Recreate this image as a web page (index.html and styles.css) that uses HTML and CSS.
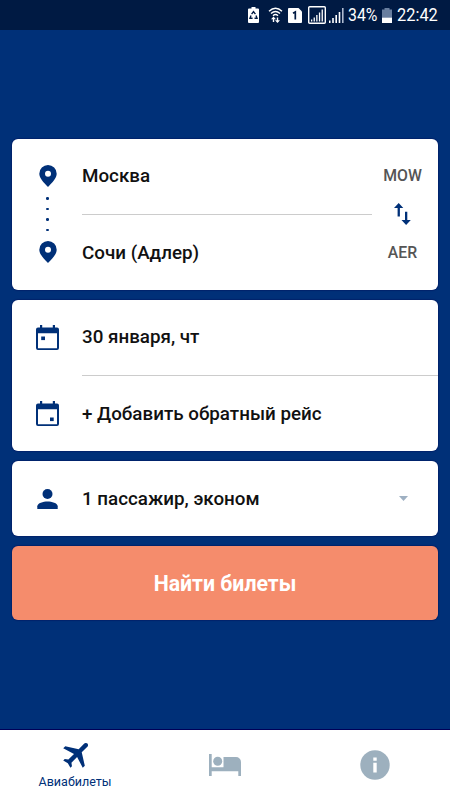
FILE: index.html
```html
<!DOCTYPE html>
<html lang="ru">
<head>
    <meta charset="UTF-8">
    <meta name="viewport" content="width=device-width, initial-scale=1.0">
    <title>Авиабилеты</title>
    <link rel="stylesheet" href="styles.css">
</head>
<body>
    <div class="app">
        <div class="status-bar">
            <svg class="recycle-icon" width="11" height="16" viewBox="0 0 11 16">
                <path fill="#fff" d="M3.500 0h4v1.500H10a1 1 0 0 1 1 1V15a1 1 0 0 1-1 1H1a1 1 0 0 1-1-1V2.500a1 1 0 0 1 1-1h2.500z"/>
                <path fill="none" stroke="#001a43" stroke-width="1.400" d="M3.600 7.200 5.500 4.700l1.900 2.500M8 8.500l1 2.700H6.500M4.600 11.200H2l1-2.700"/>
            </svg>
            <svg class="wifi-icon" width="15" height="16" viewBox="0 0 15 16">
                <g fill="none" stroke="#fff" stroke-width="1.400">
                    <path d="M1 4.200Q7.500-1.800 14 4.200M3 6.500q4.500-4 9 0M5 8.700q2.500-2.200 5 0"/>
                    <path d="M5.500 15v-4M9.500 10.500v4"/>
                </g>
                <path fill="#fff" d="M3 12.200 5.500 9.500 8 12.200zM7 13.200h5L9.500 16z"/>
            </svg>
            <svg class="sim-icon" width="14" height="15" viewBox="0 0 14 15">
                <path fill="#fff" d="M1 0h9.500L14 3.500V14a1 1 0 0 1-1 1H1a1 1 0 0 1-1-1V1a1 1 0 0 1 1-1z"/>
                <path fill="none" stroke="#001a43" stroke-width="1.700" d="M5 5.200 7.300 4v7.500"/>
            </svg>
            <svg class="signal-boxed" width="18" height="18" viewBox="0 0 18 18">
                <rect x=".7" y=".7" width="16.600" height="16.600" rx="1" fill="none" stroke="#fff" stroke-width="1.400"/>
                <path fill="#fff" d="M3 13.500h1.300v2H3zM5.600 11.500h1.300v4H5.600zM8.200 9h1.300v6.500H8.200zM10.900 6.500h1.300v9h-1.300zM13.600 3.500h1.300v12h-1.300z"/>
            </svg>
            <svg class="signal-icon" width="15" height="15" viewBox="0 0 15 15">
                <path fill="#fff" d="M0 12.500h1.500V15H0zM3.200 10h1.600v5H3.200zM6.400 7H8v8H6.400zM9.700 4h1.600v11H9.700z"/>
                <path fill="#aebbd0" d="M13 0h1.600v15H13z"/>
            </svg>
            <span class="percent">34%</span>
            <svg class="battery-icon" width="10" height="15" viewBox="0 0 10 15">
                <path fill="#687e9f" d="M2.500 0h5v1.500H10V10H0V1.500h2.500z"/>
                <path fill="#fff" d="M0 9.700h10V15H0z"/>
            </svg>
            <span class="clock">22:42</span>
        </div>

        <main class="search">
            <section class="card route">
                <div class="route-line">
                    <svg width="18" height="22" viewBox="0 0 18 22">
                        <path fill="#003078" fill-rule="evenodd" d="M9 0a8.700 8.700 0 0 0-8.700 8.700C.3 13 4.500 17.300 9 22c4.500-4.700 8.700-9 8.700-13.300A8.700 8.700 0 0 0 9 0zm0 5.700a3 3 0 1 1 0 6 3 3 0 0 1 0-6z"/>
                    </svg>
                    <div class="dots"><i></i><i></i><i></i><i></i></div>
                    <svg width="18" height="22" viewBox="0 0 18 22">
                        <path fill="#003078" fill-rule="evenodd" d="M9 0a8.700 8.700 0 0 0-8.700 8.700C.3 13 4.500 17.300 9 22c4.500-4.700 8.700-9 8.700-13.300A8.700 8.700 0 0 0 9 0zm0 5.700a3 3 0 1 1 0 6 3 3 0 0 1 0-6z"/>
                    </svg>
                </div>
                <div class="cities">
                    <div class="city">Москва</div>
                    <div class="city">Сочи (Адлер)</div>
                </div>
                <div class="codes">
                    <span class="code">MOW</span>
                    <svg class="swap-icon" width="17" height="22" viewBox="0 0 17 22">
                        <path fill="#003078" d="M0 5 4.700 0l4.600 5H5.900v8.500H3.600V5zM7.500 17H11V8.700h2.300V17h3.500l-4.700 5z"/>
                    </svg>
                    <span class="code">AER</span>
                </div>
            </section>

            <section class="card dates">
                <div class="row">
                    <div class="row-icon">
                        <svg width="23" height="25" viewBox="0 0 23 25">
                            <path fill="#003078" fill-rule="evenodd" d="M4 0h2.200v2.500h10.600V0H19v2.500h2a2 2 0 0 1 2 2V23a2 2 0 0 1-2 2H2a2 2 0 0 1-2-2V4.500a2 2 0 0 1 2-2h2zM2 8.300v14.900h19V8.300z"/>
                            <path fill="#003078" d="M5.200 11.500H9v3.600H5.200z"/>
                        </svg>
                    </div>
                    <div class="row-text">30 января, чт</div>
                </div>
                <div class="row">
                    <div class="row-icon">
                        <svg width="23" height="25" viewBox="0 0 23 25">
                            <path fill="#003078" fill-rule="evenodd" d="M4 0h2.200v2.500h10.600V0H19v2.500h2a2 2 0 0 1 2 2V23a2 2 0 0 1-2 2H2a2 2 0 0 1-2-2V4.500a2 2 0 0 1 2-2h2zM2 8.300v14.900h19V8.300z"/>
                            <path fill="#003078" d="M14 16.500h3.700v3.600H14z"/>
                        </svg>
                    </div>
                    <div class="row-text">+ Добавить обратный рейс</div>
                </div>
            </section>

            <section class="card passengers">
                <div class="row">
                    <div class="row-icon">
                        <svg width="21" height="20" viewBox="0 0 21 20">
                            <circle cx="10.500" cy="5" r="5" fill="#003078"/>
                            <path fill="#003078" d="M.3 20v-2.700c0-3.200 6-4.800 10.200-4.800s10.200 1.600 10.200 4.800V20z"/>
                        </svg>
                    </div>
                    <div class="row-text">1 пассажир, эконом</div>
                    <svg class="caret" width="9" height="5" viewBox="0 0 9 5">
                        <path fill="#9eb0c2" d="M0 0h9L4.500 5z"/>
                    </svg>
                </div>
            </section>

            <button class="find-button">Найти билеты</button>
        </main>

        <nav class="tabs">
            <div class="tab active">
                <svg width="25" height="25" viewBox="-9.700 -7.500 17.200 17.200">
                    <path fill="#003078" transform="rotate(45) translate(-11.500 -12)" d="M21 16v-2l-8-5V3.500c0-.83-.67-1.500-1.500-1.500S10 2.670 10 3.500V9l-8 5v2l8-2.500V19l-2 1.500V22l3.500-1 3.500 1v-1.500L13 19v-5.500l8 2.500z"/>
                </svg>
                <span class="tab-label">Авиабилеты</span>
            </div>
            <div class="tab">
                <svg width="32" height="22" viewBox="0 0 32 22">
                    <path fill="#9db0be" d="M0 0h2.700v13.300H14.500V3H27a5 5 0 0 1 5 5v14h-2.700v-4.700H2.700V22H0z"/>
                    <circle cx="8.700" cy="7.300" r="4.500" fill="#9db0be"/>
                </svg>
            </div>
            <div class="tab">
                <svg width="30" height="30" viewBox="0 0 30 30">
                    <circle cx="15" cy="15" r="14.700" fill="#9db0be"/>
                    <path fill="#fff" d="M13.300 7.500h3.400v3.200h-3.400zM13.300 12.700h3.400v9.800h-3.400z"/>
                </svg>
            </div>
        </nav>
    </div>
</body>
</html>
```
FILE: styles.css
```css
* {
    margin: 0;
    padding: 0;
    box-sizing: border-box;
}

body {
    font-family: Roboto, "Noto Sans", sans-serif;
    background: #003078;
}

svg {
    display: block;
    flex-shrink: 0;
}

.app {
    width: 450px;
    height: 800px;
    display: flex;
    flex-direction: column;
    overflow: hidden;
}

.status-bar {
    height: 30px;
    background: #001a43;
    display: flex;
    align-items: center;
    justify-content: flex-end;
    padding-right: 11px;
    color: #fff;
    font-size: 18px;
    line-height: 30px;
}

.wifi-icon {
    margin-left: 9px;
}

.sim-icon {
    margin-left: 5px;
}

.signal-boxed {
    margin-left: 6px;
}

.signal-icon {
    margin-left: 3px;
}

.percent {
    width: 30px;
    margin-left: 4px;
    transform: scaleX(0.88);
    transform-origin: left;
}

.battery-icon {
    margin-left: 4px;
}

.clock {
    width: 42px;
    margin-left: 5px;
    transform: scaleX(0.91);
    transform-origin: left;
}

.search {
    flex: 1;
    display: flex;
    flex-direction: column;
    gap: 9.5px;
    padding: 108.5px 12px 0;
}

.card {
    background: #fff;
    border-radius: 6px;
    box-shadow: 0 0 1px 1px rgba(0, 0, 80, 0.3);
    color: #111;
    font-size: 18.8px;
    font-weight: 500;
}

.route {
    display: flex;
    height: 151.5px;
}

.route-line {
    width: 70px;
    display: flex;
    flex-direction: column;
    align-items: center;
    justify-content: center;
    gap: 10px;
    padding-left: 1px;
}

.dots {
    height: 34px;
    display: flex;
    flex-direction: column;
    justify-content: space-between;
}

.dots i {
    width: 2.5px;
    height: 2.5px;
    border-radius: 50%;
    background: #003078;
}

.cities {
    flex: 1;
}

.city {
    height: 76px;
    display: flex;
    align-items: center;
}

.city:first-child {
    border-bottom: 1px solid #ccc;
}

.codes {
    width: 66px;
    display: flex;
    flex-direction: column;
    align-items: center;
    justify-content: center;
    gap: 17px;
    padding-right: 5px;
}

.code {
    color: #555;
    font-size: 15.8px;
    font-weight: 500;
    line-height: 21px;
}

.dates {
    height: 151.5px;
}

.passengers {
    height: 75.5px;
}

.row {
    height: 76px;
    display: flex;
}

.row-icon {
    width: 70px;
    display: flex;
    align-items: center;
    justify-content: center;
}

.row-text {
    flex: 1;
    display: flex;
    align-items: center;
}

.dates .row:first-child .row-text {
    border-bottom: 1px solid #ccc;
}

.caret {
    align-self: center;
    margin-right: 30px;
}

.find-button {
    height: 74px;
    padding-top: 2px;
    border: none;
    border-radius: 6px;
    background: #f58c6c;
    box-shadow: 0 0 1px 1px rgba(0, 0, 80, 0.3);
    color: #fff;
    font-family: inherit;
    font-size: 21.3px;
    font-weight: 700;
}

.tabs {
    height: 70px;
    display: flex;
    background: #fff;
    box-shadow: 0 -1px 0 #000058;
}

.tab {
    flex: 1;
    display: flex;
    flex-direction: column;
    align-items: center;
    justify-content: center;
}

.tab.active {
    padding-top: 2px;
}

.tab-label {
    margin-top: 6px;
    color: #003078;
    font-size: 12.5px;
    line-height: 16px;
}
```
